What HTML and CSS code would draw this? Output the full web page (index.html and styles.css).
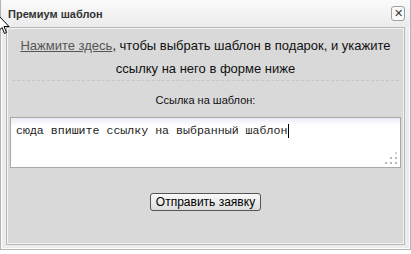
FILE: index.html
```html
<!DOCTYPE html>
<html lang="ru">
<head>
  <meta charset="UTF-8" />
  <title>Премиум шаблон</title>
  <link rel="stylesheet" href="styles.css">
</head>
<body>
  <div class="dialog">
    <div class="titlebar">
      <span class="title">Премиум шаблон</span>
      <span class="close">&#x2715;</span>
    </div>
    <div class="panel">
      <p class="intro"><a href="#">Нажмите здесь</a>, чтобы выбрать шаблон в подарок, и укажите ссылку на него в форме ниже</p>
      <div class="sep"></div>
      <form class="form">
        <label for="link">Ссылка на шаблон:</label>
        <div class="field">
          <textarea id="link" name="link">сюда впишите ссылку на выбранный шаблон</textarea>
          <span class="caret"></span>
          <svg class="grip" width="12" height="12" viewBox="0 0 12 12">
            <rect x="10" y="0" width="2" height="2" fill="#d0d0d0"/>
            <rect x="5" y="5" width="2" height="2" fill="#b8b8b8"/>
            <rect x="10" y="5" width="2" height="2" fill="#b8b8b8"/>
            <rect x="0" y="10" width="2" height="2" fill="#b8b8b8"/>
            <rect x="5" y="10" width="2" height="2" fill="#b8b8b8"/>
            <rect x="10" y="10" width="2" height="2" fill="#b8b8b8"/>
          </svg>
        </div>
        <button type="submit">Отправить заявку</button>
      </form>
    </div>
  </div>
  <svg class="cursor" width="12" height="20" viewBox="0 0 12 20">
    <path d="M0.5 0.5 L0.5 16 L4 12.5 L6.5 18.5 L8.5 17.5 L6 11.5 L11 11.5 Z" fill="#fff" stroke="#000" stroke-width="1"/>
  </svg>
</body>
</html>
```

FILE: styles.css
```css
html, body {
  margin: 0;
  padding: 0;
  background: #fff;
}
body {
  width: 411px;
  height: 254px;
  font-family: 'Liberation Sans', Arial, sans-serif;
  position: relative;
}
.dialog {
  width: 409px;
  height: 249px;
  border: 1px solid #b4b4b4;
  border-top: none;
  background: #ececec;
  box-shadow: inset 1px 0 0 #fff, inset -1px -1px 0 #fff;
}
.titlebar {
  height: 27px;
  display: flex;
  align-items: center;
  justify-content: space-between;
  padding: 0 5px 0 7px;
  background: linear-gradient(#fbfbfb, #ebebeb);
}
.title {
  font-size: 11px;
  font-weight: bold;
  color: #333;
}
.close {
  width: 12px;
  height: 13px;
  border: 1px solid #a0a0a0;
  border-radius: 3px;
  background: #fafafa;
  font-size: 11px;
  line-height: 13px;
  text-align: center;
  color: #333;
}
.panel {
  margin: 0 5px;
  height: 216px;
  border: 1px solid #b8b8b8;
  box-shadow: inset 0 0 0 1px #f4f4f4;
  background: #d9d9d9;
  text-align: center;
}
.intro {
  margin: 0;
  padding: 6px 8px 0;
  font-size: 13px;
  line-height: 23px;
  color: #111;
}
.intro a {
  color: #555;
}
.sep {
  margin: 0 5px;
  border-top: 1px dashed #c6c6c6;
}
.form {
  display: flex;
  flex-direction: column;
  align-items: center;
}
label {
  margin-top: 13px;
  font-size: 11px;
  line-height: 13px;
  color: #111;
}
.field {
  position: relative;
  margin-top: 10px;
}
textarea {
  display: block;
  box-sizing: border-box;
  width: 391px;
  height: 51px;
  margin: 0;
  padding: 6px 5px 4px;
  border: 1px solid #a8a8a8;
  background: linear-gradient(#ebebf8, #fff 8px);
  font-family: 'Liberation Mono', monospace;
  font-size: 11.6px;
  color: #222;
  resize: none;
  outline: none;
}
.caret {
  position: absolute;
  left: 278px;
  top: 7px;
  width: 1px;
  height: 14px;
  background: #000;
}
.grip {
  position: absolute;
  right: 4px;
  bottom: 4px;
}
button {
  margin-top: 25px;
  padding: 1px 5px;
  border: 1px solid #555;
  border-radius: 3px;
  background: linear-gradient(#fafafa, #dcdcdc);
  font-family: 'Liberation Sans', Arial, sans-serif;
  font-size: 12px;
  line-height: 14px;
  color: #000;
}
.cursor {
  position: absolute;
  left: -2px;
  top: 15px;
}
```
